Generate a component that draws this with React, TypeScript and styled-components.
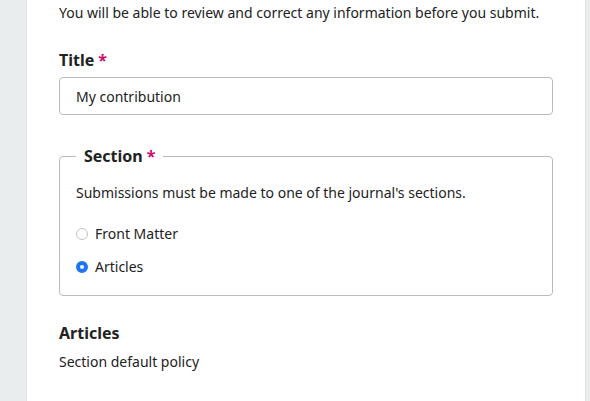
import React from 'react';
import styled, { createGlobalStyle } from 'styled-components';

const GlobalStyle = createGlobalStyle`
  html, body {
    margin: 0;
    padding: 0;
    background: #eaedee;
  }
  body {
    font-family: "Noto Sans", "Open Sans", sans-serif;
    color: #222;
  }
`;

const Page = styled.div`
  display: flex;
  min-height: 401px;
  height: 401px;
  overflow: hidden;
`;

const Gutter = styled.div`
  width: 26px;
  flex-shrink: 0;
  background: #eaedee;
  border-right: 1px solid #dfe3e4;
`;

const EdgeRail = styled.div`
  width: 4px;
  flex-shrink: 0;
  background: #eaedee;
  border-left: 1px solid #dfe3e4;
`;

const Panel = styled.main`
  flex: 1;
  background: #fff;
  padding: 3px 32px 0 32px;
`;

const Intro = styled.p`
  margin: 0;
  font-size: 14px;
  line-height: 20px;
`;

const FieldGroup = styled.div`
  margin-top: 25px;
`;

const Label = styled.label`
  display: block;
  font-size: 16px;
  font-weight: 700;
  line-height: 24px;
`;

const Required = styled.span`
  color: #d00a6c;
  margin-left: 4px;
`;

const TextInput = styled.input`
  display: block;
  box-sizing: border-box;
  width: 100%;
  height: 38px;
  margin-top: 5px;
  padding: 0 16px;
  border: 1px solid #bbb;
  border-radius: 4px;
  font-family: inherit;
  font-size: 14px;
  color: #222;
  outline: none;
`;

const Fieldset = styled.fieldset`
  margin: 29px 0 0;
  padding: 0 16px 18px;
  border: 1px solid #bbb;
  border-radius: 4px;
  min-width: 0;
`;

const Legend = styled.legend`
  padding: 0 8px;
  font-size: 16px;
  font-weight: 700;
  line-height: 24px;
`;

const Description = styled.p`
  margin: 15px 0 0;
  font-size: 14px;
  line-height: 20px;
`;

const OptionList = styled.div`
  display: flex;
  flex-direction: column;
  gap: 13px;
  margin-top: 21px;
`;

const Option = styled.label`
  display: flex;
  align-items: center;
  gap: 7px;
  font-size: 14px;
  line-height: 20px;
  cursor: pointer;
`;

const RadioDot = styled.span<{ $checked?: boolean }>`
  box-sizing: border-box;
  width: 12px;
  height: 12px;
  border-radius: 50%;
  flex-shrink: 0;
  background: #fff;
  border: ${(p) => (p.$checked ? '4px solid #1d74f5' : '1px solid #c4c4c4')};
`;

const Heading = styled.h3`
  margin: 25px 0 0;
  font-size: 16px;
  font-weight: 700;
  line-height: 24px;
`;

const Policy = styled.p`
  margin: 7px 0 0;
  font-size: 14px;
  line-height: 20px;
`;

const sections = [
  { id: 'front', label: 'Front Matter', checked: false },
  { id: 'articles', label: 'Articles', checked: true },
];

const App: React.FC = () => {
  return (
    <>
      <GlobalStyle />
      <Page>
        <Gutter />
        <Panel>
          <Intro>You will be able to review and correct any information before you submit.</Intro>

          <FieldGroup>
            <Label htmlFor="title">
              Title<Required>*</Required>
            </Label>
            <TextInput id="title" defaultValue="My contribution" />
          </FieldGroup>

          <Fieldset>
            <Legend>
              Section<Required>*</Required>
            </Legend>
            <Description>Submissions must be made to one of the journal's sections.</Description>
            <OptionList>
              {sections.map((s) => (
                <Option key={s.id}>
                  <RadioDot $checked={s.checked} />
                  {s.label}
                </Option>
              ))}
            </OptionList>
          </Fieldset>

          <Heading>Articles</Heading>
          <Policy>Section default policy</Policy>
        </Panel>
        <EdgeRail />
      </Page>
    </>
  );
};

export default App;
